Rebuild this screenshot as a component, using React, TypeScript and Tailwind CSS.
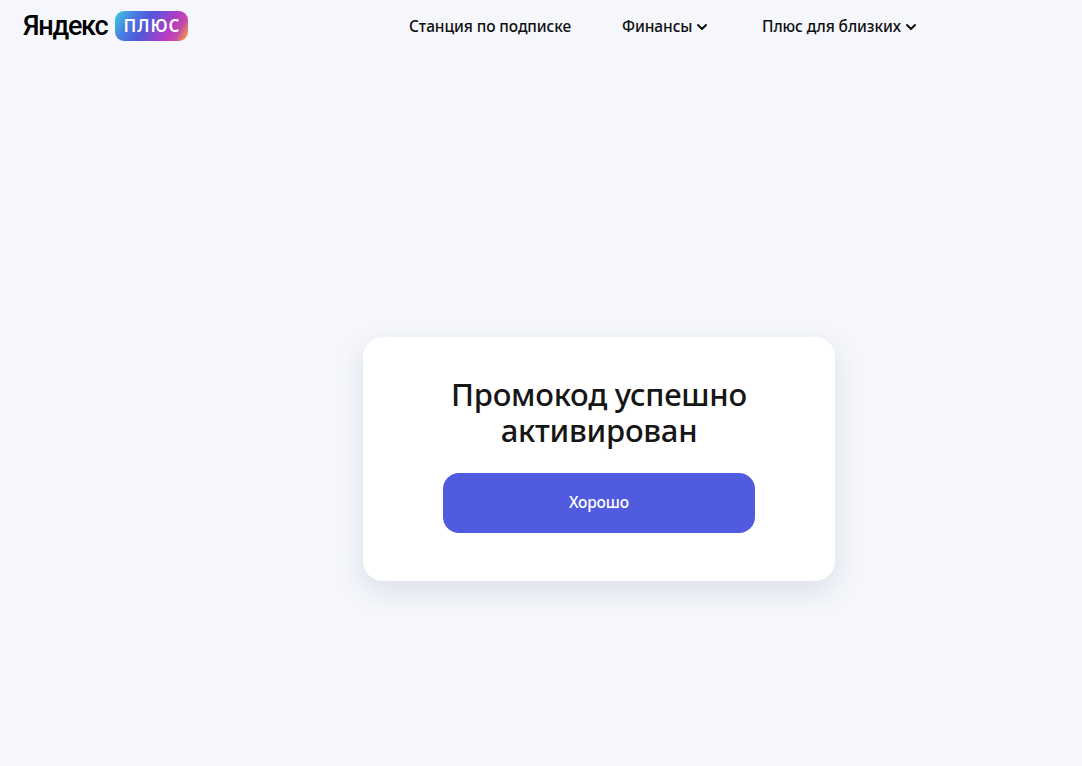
import React from "react";
import { ChevronDown } from "lucide-react";

function NavItem({ label, menu }: { label: string; menu?: boolean }) {
  return (
    <a className="flex items-center gap-[2px] text-[15.5px] font-medium text-[#0f0f0f] leading-5 tracking-[-0.1px]">
      {label}
      {menu && <ChevronDown size={16} strokeWidth={3} className="mt-[1px]" />}
    </a>
  );
}

export default function App() {
  return (
    <div className="min-h-[766px] w-full bg-[#f5f7fc] overflow-hidden font-['Noto_Sans',sans-serif]">
      <header className="flex h-[52px] items-center pl-[23px]">
        <div className="flex w-[386px] items-center gap-[8px]">
          <span className="text-[27px] font-medium leading-none text-black font-['Roboto',sans-serif] tracking-[-1.25px]">
            Яндекс
          </span>
          <span className="flex h-[30px] w-[73px] items-center justify-center rounded-[9px] bg-[linear-gradient(120deg,#38d2e0_0%,#4a7fe0_22%,#5058dc_42%,#b53cc4_72%,#c44aa8_84%,#ffb22e_100%)] text-[17px] font-semibold tracking-[0.9px] text-white">
            ПЛЮС
          </span>
        </div>
        <nav className="flex items-center">
          <div className="w-[213px]">
            <NavItem label="Станция по подписке" />
          </div>
          <div className="w-[140px]">
            <NavItem label="Финансы" menu />
          </div>
          <NavItem label="Плюс для близких" menu />
        </nav>
      </header>
      <main className="pl-[363px] pt-[285px]">
        <section className="flex h-[244px] w-[472px] flex-col items-center rounded-[20px] bg-white pt-[39px] shadow-[0_10px_28px_rgba(40,50,90,0.12)]">
          <h1 className="text-center text-[31px] font-medium leading-[36px] text-[#161616] tracking-[-0.25px]">
            Промокод успешно
            <br />
            активирован
          </h1>
          <button className="mt-[25px] h-[60px] w-[312px] rounded-[16px] bg-[#505bdf] text-[15.5px] font-medium text-white tracking-[-0.1px]">
            Хорошо
          </button>
        </section>
      </main>
    </div>
  );
}
